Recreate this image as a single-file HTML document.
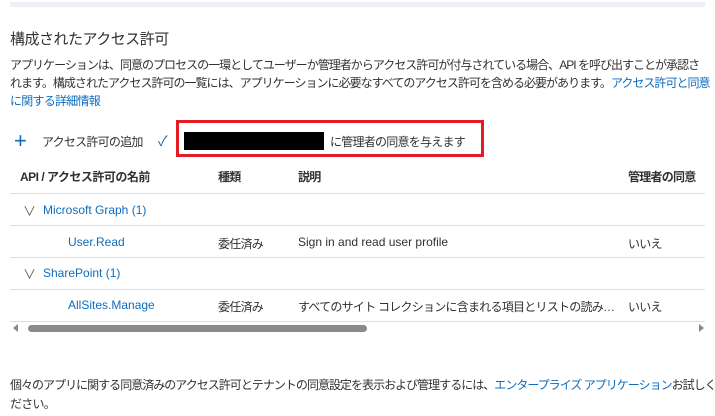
<!DOCTYPE html>
<html><head><meta charset="utf-8"><style>
body{margin:0;width:715px;height:416px;background:#fff;position:relative;overflow:hidden;font-family:"Liberation Sans","Noto Sans CJK JP",sans-serif;color:#323130;font-size:12px}
.a{position:absolute;white-space:nowrap}
.l{color:#0f6cbd}
.hr{position:absolute;left:10px;width:695px;height:1px;background:#e1dfdd}
.p{letter-spacing:-0.75px}
.q{letter-spacing:-0.98px}
</style></head><body>
<div class="a" style="left:10px;top:2px;width:695px;height:5px;background:#eef0f7"></div>
<div class="a" style="left:10px;top:28px;font-size:15px;letter-spacing:-0.5px">構成されたアクセス許可</div>
<div class="a q" style="left:10px;top:56px">アプリケーションは、同意のプロセスの一環としてユーザーか管理者からアクセス許可が付与されている場合、API を呼び出すことが承認さ</div>
<div class="a q" style="left:10px;top:74px">れます。構成されたアクセス許可の一覧には、アプリケーションに必要なすべてのアクセス許可を含める必要があります。<span class="l">アクセス許可と同意</span></div>
<div class="a p l" style="left:10px;top:92px">に関する詳細情報</div>
<div class="a" style="left:14px;top:128px;font-size:22px;color:#0f6cbd;font-weight:300;line-height:26px">+</div>
<div class="a p" style="left:42px;top:133px">アクセス許可の追加</div>
<div class="a" style="left:158px;top:131px;color:#0f6cbd;font-size:14px">✓</div>
<div class="a" style="left:176px;top:120px;width:302px;height:31px;border:3px solid #e31b23"></div>
<div class="a" style="left:184px;top:132px;width:140px;height:18px;background:#000"></div>
<div class="a p" style="left:330px;top:133px">に管理者の同意を与えます</div>
<div class="a" style="left:20px;top:168px;font-weight:bold;letter-spacing:-0.5px">API / アクセス許可の名前</div>
<div class="a p" style="left:218px;top:168px;font-weight:bold">種類</div>
<div class="a p" style="left:298px;top:168px;font-weight:bold">説明</div>
<div class="a p" style="left:628px;top:168px;font-weight:bold">管理者の同意</div>
<div class="hr" style="top:193px"></div>
<div class="a" style="left:23px;top:201px;font-size:13px;color:#605e5c">∨</div>
<div class="a l" style="left:43px;top:203px">Microsoft Graph (1)</div>
<div class="hr" style="top:225px"></div>
<div class="a l" style="left:68px;top:235px">User.Read</div>
<div class="a p" style="left:218px;top:235px">委任済み</div>
<div class="a" style="left:298px;top:235px">Sign in and read user profile</div>
<div class="a p" style="left:628px;top:235px">いいえ</div>
<div class="hr" style="top:257px"></div>
<div class="a" style="left:23px;top:264px;font-size:13px;color:#605e5c">∨</div>
<div class="a l" style="left:43px;top:266px">SharePoint (1)</div>
<div class="hr" style="top:289px"></div>
<div class="a l" style="left:68px;top:298px">AllSites.Manage</div>
<div class="a p" style="left:218px;top:298px">委任済み</div>
<div class="a p" style="left:298px;top:298px;width:320px;overflow:hidden;text-overflow:ellipsis">すべてのサイト コレクションに含まれる項目とリストの読み取り、編集</div>
<div class="a p" style="left:628px;top:298px">いいえ</div>
<div class="hr" style="top:321px"></div>
<div class="a" style="left:13px;top:324px;width:0;height:0;border-top:4px solid transparent;border-bottom:4px solid transparent;border-right:5px solid #888"></div>
<div class="a" style="left:28px;top:325px;width:339px;height:7px;border-radius:4px;background:#8a8a8a"></div>
<div class="a" style="left:699px;top:324px;width:0;height:0;border-top:4px solid transparent;border-bottom:4px solid transparent;border-left:5px solid #888"></div>
<div class="a q" style="left:10px;top:376px">個々のアプリに関する同意済みのアクセス許可とテナントの同意設定を表示および管理するには、<span class="l">エンタープライズ アプリケーション</span>お試しく</div>
<div class="a p" style="left:10px;top:395px">ださい。</div>
</body></html>
